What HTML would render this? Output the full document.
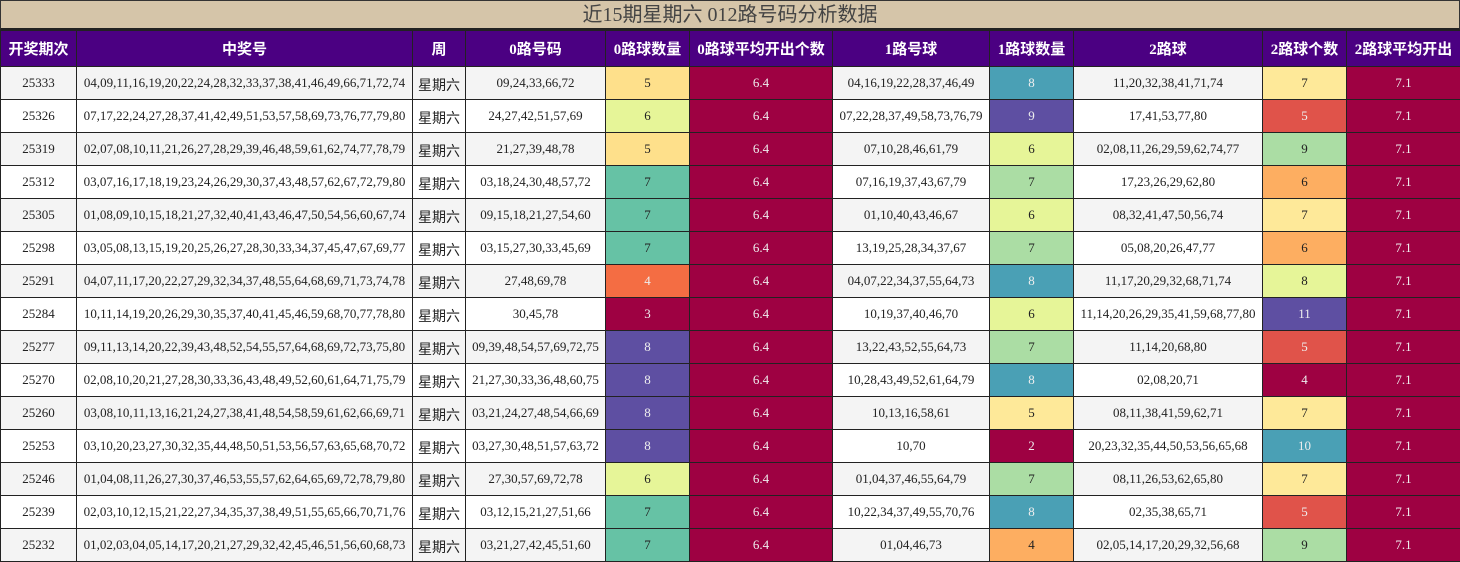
<!DOCTYPE html>
<html><head><meta charset="utf-8"><style>
body{margin:0;width:1460px;height:562px;overflow:hidden;background:#fff;font-family:"Liberation Serif","Noto Serif CJK SC",serif}
.t{background:#d5c5a9;border:1px solid #333;border-bottom:2px solid #222;box-sizing:border-box;height:30px;text-align:center;font-size:20px;line-height:28px;color:#444;font-family:"Liberation Serif","Noto Sans CJK SC",serif}
table{border-collapse:collapse;table-layout:fixed;width:1460px}
td,th{border:1px solid #222;text-align:center;padding:0;font-size:13px;color:#222;white-space:nowrap;overflow:hidden}
th{background:#4b0082;color:#fff;height:35px;font-size:15px;font-weight:bold;font-family:"Liberation Serif","Noto Sans CJK SC",sans-serif}
td{height:32px}
tr.o td{background:#f4f4f4}
tr.e td{background:#fff}
td.w{font-size:14px;font-family:"Liberation Serif","Noto Sans CJK SC",serif;padding-top:4px;height:28px}
tr td.a{background:#9e0142;color:#eee}
.c5{background:#fee08b!important}.c6{background:#e6f598!important}.c7{background:#66c2a5!important}
.c4{background:#f46d43!important;color:#eee!important}.c3{background:#9e0142!important;color:#eee!important}.c8{background:#5e4fa2!important;color:#eee!important}
.d8{background:#4aa0b5!important;color:#eee!important}.d9{background:#5e4fa2!important;color:#eee!important}.d6{background:#e6f598!important}.d7{background:#abdda4!important}.d5{background:#fee999!important}.d2{background:#9e0142!important;color:#eee!important}.d4{background:#fdae61!important}
.e7{background:#fee999!important}.e5{background:#e0534a!important;color:#eee!important}.e9{background:#abdda4!important}.e6{background:#fdae61!important}.e8{background:#e6f598!important}.e11{background:#5e4fa2!important;color:#eee!important}.e4{background:#9e0142!important;color:#eee!important}.e10{background:#4aa0b5!important;color:#eee!important}
</style></head><body>
<div class="t">近15期星期六 012路号码分析数据</div>
<table>
<colgroup><col style="width:76px"><col style="width:336px"><col style="width:53px"><col style="width:140px"><col style="width:84px"><col style="width:143px"><col style="width:157px"><col style="width:84px"><col style="width:189px"><col style="width:84px"><col style="width:114px"></colgroup>
<tr><th>开奖期次</th><th>中奖号</th><th>周</th><th>0路号码</th><th>0路球数量</th><th>0路球平均开出个数</th><th>1路号球</th><th>1路球数量</th><th>2路球</th><th>2路球个数</th><th>2路球平均开出</th></tr>
<tr class="o"><td>25333</td><td>04,09,11,16,19,20,22,24,28,32,33,37,38,41,46,49,66,71,72,74</td><td class="w">星期六</td><td>09,24,33,66,72</td><td class="c5">5</td><td class="a">6.4</td><td>04,16,19,22,28,37,46,49</td><td class="d8">8</td><td>11,20,32,38,41,71,74</td><td class="e7">7</td><td class="a">7.1</td></tr>
<tr class="e"><td>25326</td><td>07,17,22,24,27,28,37,41,42,49,51,53,57,58,69,73,76,77,79,80</td><td class="w">星期六</td><td>24,27,42,51,57,69</td><td class="c6">6</td><td class="a">6.4</td><td>07,22,28,37,49,58,73,76,79</td><td class="d9">9</td><td>17,41,53,77,80</td><td class="e5">5</td><td class="a">7.1</td></tr>
<tr class="o"><td>25319</td><td>02,07,08,10,11,21,26,27,28,29,39,46,48,59,61,62,74,77,78,79</td><td class="w">星期六</td><td>21,27,39,48,78</td><td class="c5">5</td><td class="a">6.4</td><td>07,10,28,46,61,79</td><td class="d6">6</td><td>02,08,11,26,29,59,62,74,77</td><td class="e9">9</td><td class="a">7.1</td></tr>
<tr class="e"><td>25312</td><td>03,07,16,17,18,19,23,24,26,29,30,37,43,48,57,62,67,72,79,80</td><td class="w">星期六</td><td>03,18,24,30,48,57,72</td><td class="c7">7</td><td class="a">6.4</td><td>07,16,19,37,43,67,79</td><td class="d7">7</td><td>17,23,26,29,62,80</td><td class="e6">6</td><td class="a">7.1</td></tr>
<tr class="o"><td>25305</td><td>01,08,09,10,15,18,21,27,32,40,41,43,46,47,50,54,56,60,67,74</td><td class="w">星期六</td><td>09,15,18,21,27,54,60</td><td class="c7">7</td><td class="a">6.4</td><td>01,10,40,43,46,67</td><td class="d6">6</td><td>08,32,41,47,50,56,74</td><td class="e7">7</td><td class="a">7.1</td></tr>
<tr class="e"><td>25298</td><td>03,05,08,13,15,19,20,25,26,27,28,30,33,34,37,45,47,67,69,77</td><td class="w">星期六</td><td>03,15,27,30,33,45,69</td><td class="c7">7</td><td class="a">6.4</td><td>13,19,25,28,34,37,67</td><td class="d7">7</td><td>05,08,20,26,47,77</td><td class="e6">6</td><td class="a">7.1</td></tr>
<tr class="o"><td>25291</td><td>04,07,11,17,20,22,27,29,32,34,37,48,55,64,68,69,71,73,74,78</td><td class="w">星期六</td><td>27,48,69,78</td><td class="c4">4</td><td class="a">6.4</td><td>04,07,22,34,37,55,64,73</td><td class="d8">8</td><td>11,17,20,29,32,68,71,74</td><td class="e8">8</td><td class="a">7.1</td></tr>
<tr class="e"><td>25284</td><td>10,11,14,19,20,26,29,30,35,37,40,41,45,46,59,68,70,77,78,80</td><td class="w">星期六</td><td>30,45,78</td><td class="c3">3</td><td class="a">6.4</td><td>10,19,37,40,46,70</td><td class="d6">6</td><td>11,14,20,26,29,35,41,59,68,77,80</td><td class="e11">11</td><td class="a">7.1</td></tr>
<tr class="o"><td>25277</td><td>09,11,13,14,20,22,39,43,48,52,54,55,57,64,68,69,72,73,75,80</td><td class="w">星期六</td><td>09,39,48,54,57,69,72,75</td><td class="c8">8</td><td class="a">6.4</td><td>13,22,43,52,55,64,73</td><td class="d7">7</td><td>11,14,20,68,80</td><td class="e5">5</td><td class="a">7.1</td></tr>
<tr class="e"><td>25270</td><td>02,08,10,20,21,27,28,30,33,36,43,48,49,52,60,61,64,71,75,79</td><td class="w">星期六</td><td>21,27,30,33,36,48,60,75</td><td class="c8">8</td><td class="a">6.4</td><td>10,28,43,49,52,61,64,79</td><td class="d8">8</td><td>02,08,20,71</td><td class="e4">4</td><td class="a">7.1</td></tr>
<tr class="o"><td>25260</td><td>03,08,10,11,13,16,21,24,27,38,41,48,54,58,59,61,62,66,69,71</td><td class="w">星期六</td><td>03,21,24,27,48,54,66,69</td><td class="c8">8</td><td class="a">6.4</td><td>10,13,16,58,61</td><td class="d5">5</td><td>08,11,38,41,59,62,71</td><td class="e7">7</td><td class="a">7.1</td></tr>
<tr class="e"><td>25253</td><td>03,10,20,23,27,30,32,35,44,48,50,51,53,56,57,63,65,68,70,72</td><td class="w">星期六</td><td>03,27,30,48,51,57,63,72</td><td class="c8">8</td><td class="a">6.4</td><td>10,70</td><td class="d2">2</td><td>20,23,32,35,44,50,53,56,65,68</td><td class="e10">10</td><td class="a">7.1</td></tr>
<tr class="o"><td>25246</td><td>01,04,08,11,26,27,30,37,46,53,55,57,62,64,65,69,72,78,79,80</td><td class="w">星期六</td><td>27,30,57,69,72,78</td><td class="c6">6</td><td class="a">6.4</td><td>01,04,37,46,55,64,79</td><td class="d7">7</td><td>08,11,26,53,62,65,80</td><td class="e7">7</td><td class="a">7.1</td></tr>
<tr class="e"><td>25239</td><td>02,03,10,12,15,21,22,27,34,35,37,38,49,51,55,65,66,70,71,76</td><td class="w">星期六</td><td>03,12,15,21,27,51,66</td><td class="c7">7</td><td class="a">6.4</td><td>10,22,34,37,49,55,70,76</td><td class="d8">8</td><td>02,35,38,65,71</td><td class="e5">5</td><td class="a">7.1</td></tr>
<tr class="o"><td>25232</td><td>01,02,03,04,05,14,17,20,21,27,29,32,42,45,46,51,56,60,68,73</td><td class="w">星期六</td><td>03,21,27,42,45,51,60</td><td class="c7">7</td><td class="a">6.4</td><td>01,04,46,73</td><td class="d4">4</td><td>02,05,14,17,20,29,32,56,68</td><td class="e9">9</td><td class="a">7.1</td></tr>
</table>
</body></html>
